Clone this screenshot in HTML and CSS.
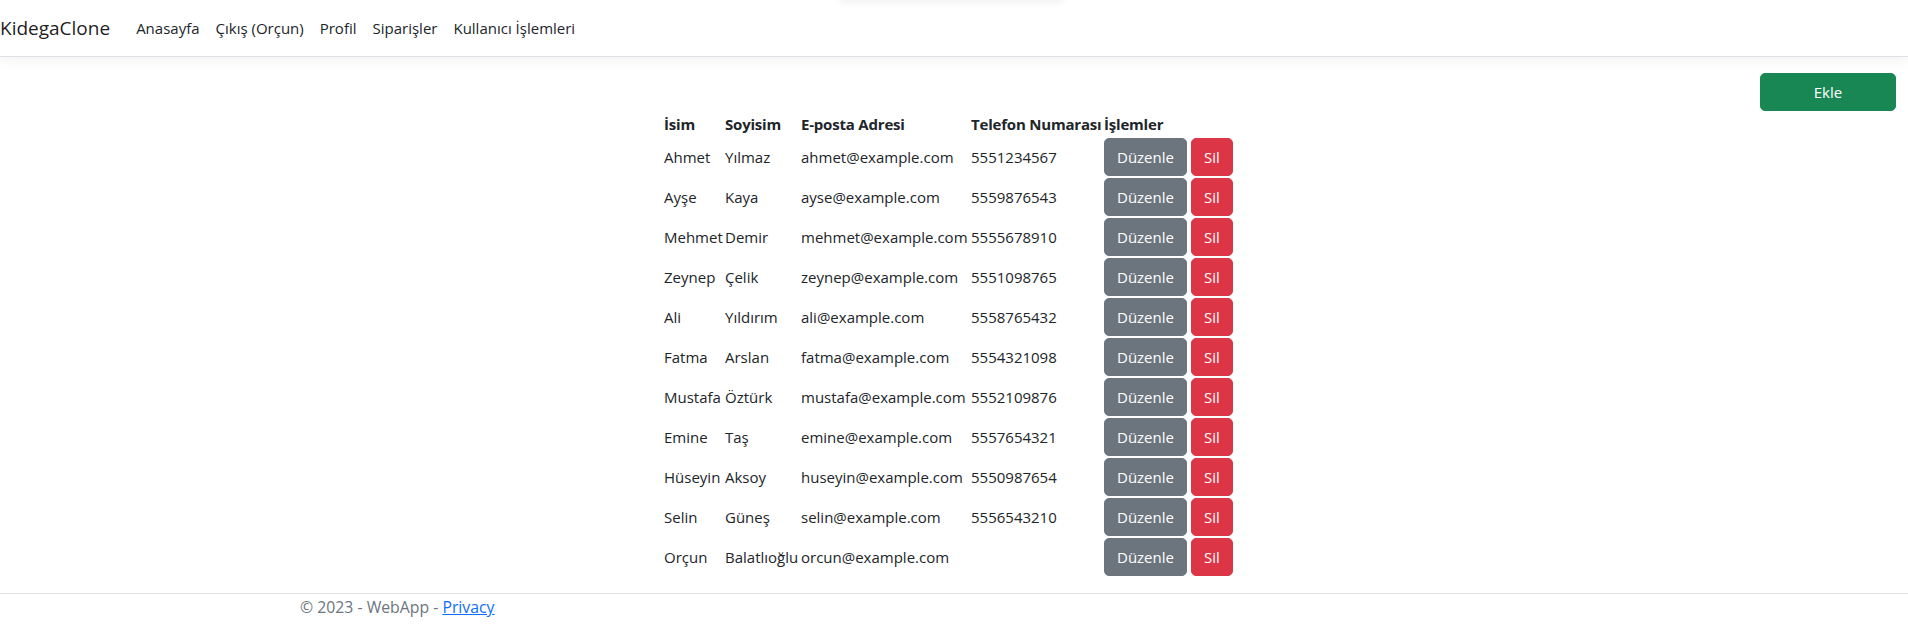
FILE: index.html
```html
<!DOCTYPE html>
<html lang="tr">
<head>
<meta charset="utf-8">
<title>KidegaClone</title>
<link rel="stylesheet" href="styles.css">
</head>
<body>
<div class="ghost"></div>
<header class="navbar">
  <a class="brand" href="#">KidegaClone</a>
  <nav class="nav">
    <a class="nav-link" href="#">Anasayfa</a>
    <a class="nav-link" href="#">Çıkış (Orçun)</a>
    <a class="nav-link" href="#">Profil</a>
    <a class="nav-link" href="#">Siparişler</a>
    <a class="nav-link" href="#">Kullanıcı İşlemleri</a>
  </nav>
</header>
<main class="main">
  <div class="toolbar">
    <a class="btn btn-success btn-add" href="#">Ekle</a>
  </div>
  <div class="table-wrap">
    <table class="users">
      <colgroup>
        <col class="c1"><col class="c2"><col class="c3"><col class="c4"><col class="c5">
      </colgroup>
      <thead>
        <tr><th>İsim</th><th>Soyisim</th><th>E-posta Adresi</th><th>Telefon Numarası</th><th>İşlemler</th></tr>
      </thead>
      <tbody>
        <tr><td>Ahmet</td><td>Yılmaz</td><td>ahmet@example.com</td><td>5551234567</td><td class="actions"><a class="btn btn-secondary" href="#">Düzenle</a><a class="btn btn-danger" href="#">Sil</a></td></tr>
        <tr><td>Ayşe</td><td>Kaya</td><td>ayse@example.com</td><td>5559876543</td><td class="actions"><a class="btn btn-secondary" href="#">Düzenle</a><a class="btn btn-danger" href="#">Sil</a></td></tr>
        <tr><td>Mehmet</td><td>Demir</td><td>mehmet@example.com</td><td>5555678910</td><td class="actions"><a class="btn btn-secondary" href="#">Düzenle</a><a class="btn btn-danger" href="#">Sil</a></td></tr>
        <tr><td>Zeynep</td><td>Çelik</td><td>zeynep@example.com</td><td>5551098765</td><td class="actions"><a class="btn btn-secondary" href="#">Düzenle</a><a class="btn btn-danger" href="#">Sil</a></td></tr>
        <tr><td>Ali</td><td>Yıldırım</td><td>ali@example.com</td><td>5558765432</td><td class="actions"><a class="btn btn-secondary" href="#">Düzenle</a><a class="btn btn-danger" href="#">Sil</a></td></tr>
        <tr><td>Fatma</td><td>Arslan</td><td>fatma@example.com</td><td>5554321098</td><td class="actions"><a class="btn btn-secondary" href="#">Düzenle</a><a class="btn btn-danger" href="#">Sil</a></td></tr>
        <tr><td>Mustafa</td><td>Öztürk</td><td>mustafa@example.com</td><td>5552109876</td><td class="actions"><a class="btn btn-secondary" href="#">Düzenle</a><a class="btn btn-danger" href="#">Sil</a></td></tr>
        <tr><td>Emine</td><td>Taş</td><td>emine@example.com</td><td>5557654321</td><td class="actions"><a class="btn btn-secondary" href="#">Düzenle</a><a class="btn btn-danger" href="#">Sil</a></td></tr>
        <tr><td>Hüseyin</td><td>Aksoy</td><td>huseyin@example.com</td><td>5550987654</td><td class="actions"><a class="btn btn-secondary" href="#">Düzenle</a><a class="btn btn-danger" href="#">Sil</a></td></tr>
        <tr><td>Selin</td><td>Güneş</td><td>selin@example.com</td><td>5556543210</td><td class="actions"><a class="btn btn-secondary" href="#">Düzenle</a><a class="btn btn-danger" href="#">Sil</a></td></tr>
        <tr><td>Orçun</td><td>Balatlıoğlu</td><td>orcun@example.com</td><td></td><td class="actions"><a class="btn btn-secondary" href="#">Düzenle</a><a class="btn btn-danger" href="#">Sil</a></td></tr>
      </tbody>
    </table>
  </div>
</main>
<footer class="footer">
  <div class="footer-inner">© 2023 - WebApp - <a class="privacy" href="#">Privacy</a></div>
</footer>
</body>
</html>
```

FILE: styles.css
```css
* { box-sizing: border-box; }
html, body { margin: 0; padding: 0; }
body {
  font-family: "Open Sans", "Noto Sans", sans-serif;
  font-size: 15px;
  line-height: 24px;
  color: #212529;
  background: #fff;
  overflow: hidden;
}
a { text-decoration: none; }

.ghost {
  position: absolute;
  top: -30px;
  left: 840px;
  width: 222px;
  height: 30px;
  background: #fff;
  box-shadow: 0 2px 8px rgba(0, 0, 0, 0.07);
}

.navbar {
  display: flex;
  align-items: center;
  height: 57px;
  padding: 8px 0;
  border-bottom: 1px solid #dee2e6;
  box-shadow: 0 4px 12px rgba(0, 0, 0, 0.05);
  background: #fff;
}
.brand {
  font-size: 19px;
  line-height: 30px;
  padding: 5px 0;
  color: rgba(0, 0, 0, 0.9);
  margin-right: 18px;
}
.nav { display: flex; }
.nav-link {
  padding: 8px;
  color: #212529;
}

.main { padding: 16px 12px 0; }
.toolbar { display: flex; justify-content: flex-end; }
.btn {
  display: inline-block;
  height: 38px;
  padding: 6px 12px;
  border: 1px solid transparent;
  border-radius: 5px;
  color: #fff;
  font-size: 15px;
  line-height: 24px;
  text-align: center;
}
.btn-success { background: #198754; border-color: #198754; }
.btn-secondary { background: #6c757d; border-color: #6c757d; }
.btn-danger { background: #dc3545; border-color: #dc3545; }
.btn-add { width: 136px; }

.table-wrap {
  display: flex;
  justify-content: center;
  padding: 0 10px 0 0;
  margin-top: 1px;
}
.users {
  border-collapse: collapse;
  table-layout: fixed;
  width: 570px;
}
.c1 { width: 61px; }
.c2 { width: 76px; }
.c3 { width: 170px; }
.c4 { width: 133px; }
.c5 { width: 130px; }
.users th {
  text-align: left;
  font-weight: 700;
  letter-spacing: -0.2px;
  padding: 0 0 1px 0;
  vertical-align: top;
  white-space: nowrap;
}
.users td {
  padding: 1px 0;
  vertical-align: middle;
  white-space: nowrap;
}
.actions { display: flex; gap: 4px; }

.footer {
  margin-top: 16px;
  border-top: 1px solid #dee2e6;
  padding-top: 1px;
  color: #6c757d;
  font-size: 15.8px;
}
.footer-inner {
  max-width: 1308px;
  margin: 0 auto;
}
.privacy { color: #0d6efd; text-decoration: underline; }
```
